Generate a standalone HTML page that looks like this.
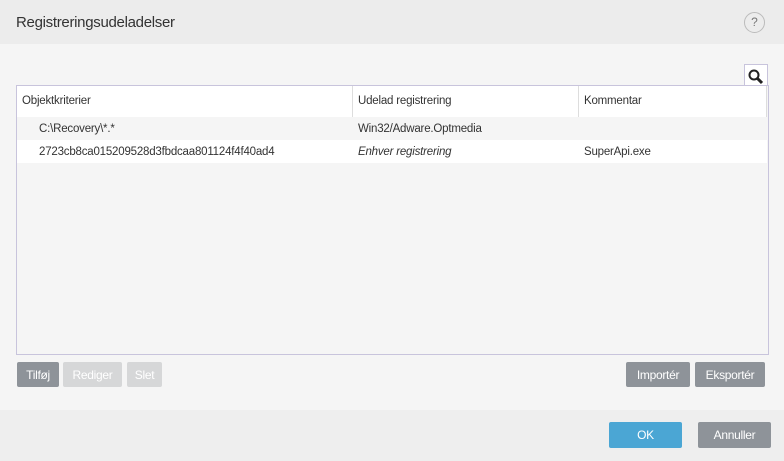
<!DOCTYPE html>
<html><head><style>
body{margin:0;width:784px;height:461px;position:relative;font-family:"Liberation Sans",sans-serif;background:#f5f5f5;overflow:hidden;color:#333}
.a{position:absolute;white-space:nowrap}
.btn{position:absolute;color:#fff;font-size:12px;text-align:center;border-radius:2px;line-height:26px;height:25px;letter-spacing:-0.3px}
.t{font-size:11.5px;letter-spacing:-0.2px}
</style></head><body>
<div class="a" style="left:0;top:0;width:784px;height:44px;background:#ececec"></div>
<div class="a" style="left:16px;top:14px;font-size:15px;color:#333;letter-spacing:-0.3px">Registreringsudeladelser</div>
<div class="a" style="left:744px;top:12px;width:19px;height:19px;border:1.5px solid #bbb;border-radius:50%;text-align:center;font-size:12px;line-height:19px;color:#777">?</div>
<div class="a" style="left:744px;top:64px;width:22px;height:22px;background:#fff;border:1px solid #c8c4dc;border-bottom:none">
<svg width="22" height="22"><circle cx="9" cy="10" r="4.5" fill="none" stroke="#222" stroke-width="2"/><line x1="12" y1="13" x2="17" y2="18" stroke="#222" stroke-width="3"/></svg></div>
<div class="a" style="left:16px;top:85px;width:751px;height:268px;border:1px solid #c8c4dc;background:#f5f5f5"></div>
<div class="a" style="left:17px;top:86px;width:750px;height:31px;background:#fff"></div>
<div class="a" style="left:352px;top:86px;width:1px;height:31px;background:#ddd"></div>
<div class="a" style="left:578px;top:86px;width:1px;height:31px;background:#ddd"></div>
<div class="a" style="left:766px;top:86px;width:1px;height:31px;background:#ddd"></div>
<div class="a t" style="left:22px;top:95px">Objektkriterier</div>
<div class="a t" style="left:358px;top:95px">Udelad registrering</div>
<div class="a t" style="left:584px;top:95px">Kommentar</div>
<div class="a" style="left:17px;top:140px;width:750px;height:23px;background:#fff"></div>
<div class="a t" style="left:39px;top:123px">C:\Recovery\*.*</div>
<div class="a t" style="left:358px;top:123px">Win32/Adware.Optmedia</div>
<div class="a t" style="left:39px;top:146px">2723cb8ca015209528d3fbdcaa801124f4f40ad4</div>
<div class="a t" style="left:358px;top:146px;font-style:italic">Enhver registrering</div>
<div class="a t" style="left:584px;top:146px">SuperApi.exe</div>
<div class="btn" style="left:17px;top:362px;width:42px;background:#8e9399">Tilføj</div>
<div class="btn" style="left:63px;top:362px;width:59px;background:#d6d7d8">Rediger</div>
<div class="btn" style="left:127px;top:362px;width:35px;background:#d6d7d8">Slet</div>
<div class="btn" style="left:626px;top:362px;width:64px;background:#8e9399">Importér</div>
<div class="btn" style="left:695px;top:362px;width:70px;background:#8e9399">Eksportér</div>
<div class="a" style="left:0;top:410px;width:784px;height:51px;background:#eeeeee"></div>
<div class="btn" style="left:609px;top:422px;width:73px;height:26px;line-height:27px;background:#4ba6d4">OK</div>
<div class="btn" style="left:698px;top:422px;width:73px;height:26px;line-height:27px;background:#8e9399">Annuller</div>
</body></html>
